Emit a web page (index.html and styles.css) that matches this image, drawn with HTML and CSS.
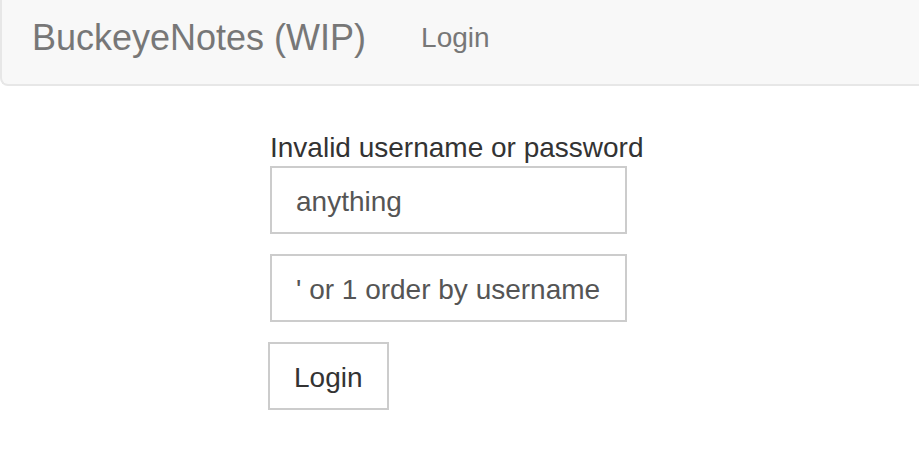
FILE: index.html
```html
<!DOCTYPE html>
<html>
<head>
<meta charset="utf-8">
<link rel="stylesheet" href="styles.css">
<title>BuckeyeNotes</title>
</head>
<body>
<nav class="navbar">
  <a class="brand" href="#">BuckeyeNotes (WIP)</a>
  <a class="nav-link" href="#">Login</a>
</nav>
<main class="content">
  <form class="login-form">
    <div class="message">Invalid username or password</div>
    <input class="field" type="text" value="anything">
    <input class="field" type="text" value="' or 1 order by username --">
    <button class="btn" type="button">Login</button>
  </form>
</main>
</body>
</html>
```
FILE: styles.css
```css
html, body {
  margin: 0;
  padding: 0;
  background: #fff;
}
body {
  font-family: "Liberation Sans", Arial, Helvetica, sans-serif;
  color: #333;
  font-size: 28px;
  line-height: 40px;
}
.navbar {
  display: flex;
  align-items: center;
  box-sizing: border-box;
  height: 86px;
  padding-bottom: 8px;
  background: #f8f8f8;
  border-left: 2px solid #e7e7e7;
  border-bottom: 2px solid #e7e7e7;
  border-radius: 0 0 0 8px;
  padding-left: 30px;
}
.brand {
  font-size: 36px;
  line-height: 40px;
  color: #777;
  text-decoration: none;
  margin-right: 55px;
}
.nav-link {
  font-size: 28px;
  color: #777;
  text-decoration: none;
}
.content {
  padding-left: 270px;
  padding-top: 42px;
}
.login-form {
  display: flex;
  flex-direction: column;
  align-items: flex-start;
  width: 357px;
}
.message {
  color: #333;
  white-space: nowrap;
  margin-bottom: -2px;
}
.field {
  box-sizing: border-box;
  width: 357px;
  height: 68px;
  border: 2px solid #ccc;
  border-radius: 0;
  padding: 14px 24px 10px;
  font-family: inherit;
  font-size: 28px;
  line-height: 40px;
  color: #555;
  background: #fff;
  margin: 0 0 20px 0;
  outline: none;
}
.btn {
  box-sizing: border-box;
  height: 68px;
  margin-left: -2px;
  padding: 14px 24px 10px;
  border: 2px solid #ccc;
  border-radius: 0;
  background: #fff;
  font-family: inherit;
  font-size: 28px;
  line-height: 40px;
  color: #333;
}
```
